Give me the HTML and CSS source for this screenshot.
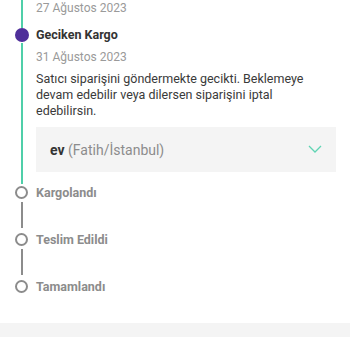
FILE: index.html
```html
<!DOCTYPE html>
<html lang="tr">
<head>
<meta charset="utf-8">
<link rel="stylesheet" href="styles.css">
</head>
<body>
<div class="timeline">
  <div class="step">
    <div class="rail"><div class="line green grow"></div></div>
    <div class="content">
      <div class="date prev">27 Ağustos 2023</div>
    </div>
  </div>
  <div class="step current">
    <div class="rail">
      <div class="dot"></div>
      <div class="line green grow"></div>
    </div>
    <div class="content">
      <div class="title">Geciken Kargo</div>
      <div class="date">31 Ağustos 2023</div>
      <p class="msg">Satıcı siparişini göndermekte gecikti. Beklemeye devam edebilir veya dilersen siparişini iptal edebilirsin.</p>
      <div class="address">
        <span class="addr-text"><b>ev</b> (Fatih/İstanbul)</span>
        <svg class="chev" width="14" height="8" viewBox="0 0 14 8"><path d="M1 1 L7 7 L13 1" fill="none" stroke="#5fd4b3" stroke-width="1.3"/></svg>
      </div>
    </div>
  </div>
  <div class="step pending">
    <div class="rail"><div class="ring"></div><div class="line gray"></div></div>
    <div class="content"><div class="label">Kargolandı</div></div>
  </div>
  <div class="step pending">
    <div class="rail"><div class="ring"></div><div class="line gray"></div></div>
    <div class="content"><div class="label">Teslim Edildi</div></div>
  </div>
  <div class="step pending">
    <div class="rail"><div class="ring"></div></div>
    <div class="content"><div class="label">Tamamlandı</div></div>
  </div>
</div>
<div class="footer-bar"></div>
</body>
</html>
```

FILE: styles.css
```css
html, body {
  margin: 0;
  padding: 0;
  background: #fff;
  font-family: Roboto, "Noto Sans", sans-serif;
}
.timeline {
  padding-left: 14px;
  padding-right: 14px;
}
.step {
  display: grid;
  grid-template-columns: 15px 1fr;
  column-gap: 7px;
}
.rail {
  display: flex;
  flex-direction: column;
  align-items: center;
}
.line {
  width: 2px;
}
.line.green { background: #4fcfa9; }
.line.gray { background: #8c8c8c; height: 26px; margin: 3px 0; }
.grow { flex: 1; }
.step:first-child { height: 28px; }
.date {
  font-size: 12px;
  line-height: 16px;
  color: #9a9a9a;
}
.dot {
  width: 14px;
  height: 14px;
  border-radius: 50%;
  background: #4f2f9a;
  margin-bottom: 1px;
}
.current .content { padding-bottom: 12px; }
.title {
  font-size: 12.5px;
  font-weight: 700;
  line-height: 16px;
  color: #333;
  margin-top: -1px;
}
.current .date { margin-top: 6px; }
.msg {
  margin: 6px 0 0;
  font-size: 12.5px;
  line-height: 16px;
  color: #3a3a3a;
  padding-right: 16px;
}
.address {
  margin-top: 8px;
  background: #f4f4f4;
  height: 45px;
  display: flex;
  align-items: center;
  justify-content: space-between;
  padding: 0 14px 0 14px;
}
.addr-text {
  font-size: 14px;
  color: #8c8c8c;
}
.addr-text b {
  color: #333;
  font-weight: 700;
}
.chev { margin-top: -2px; }
.pending .rail { padding-top: 2px; }
.ring {
  width: 9px;
  height: 9px;
  border: 2px solid #8c8c8c;
  border-radius: 50%;
}
.label {
  font-size: 12.5px;
  font-weight: 700;
  color: #8c8c8c;
  line-height: 16px;
  margin-top: 1px;
}
.footer-bar {
  margin-top: 28px;
  height: 14px;
  background: #f4f4f4;
}
```
